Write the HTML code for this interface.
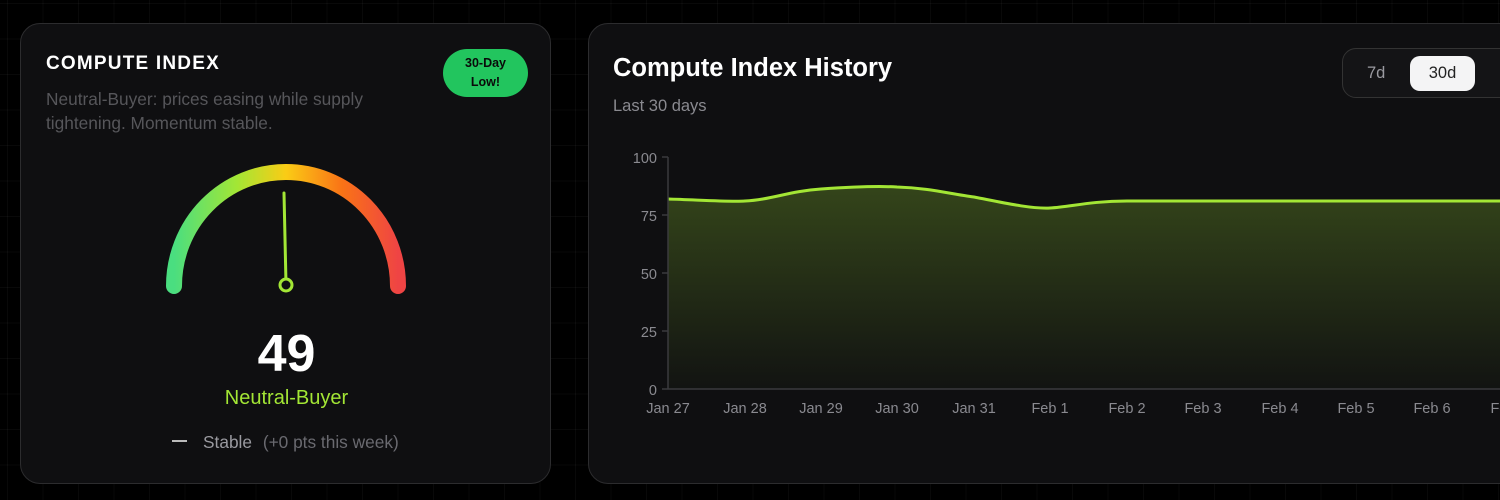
<!DOCTYPE html>
<html><head><meta charset="utf-8"><style>
*{margin:0;padding:0;box-sizing:border-box}
body{width:1500px;height:500px;overflow:hidden;background:#000;font-family:"Liberation Sans",sans-serif;position:relative;
background-image:linear-gradient(rgba(255,255,255,0.035) 1px,transparent 1px),linear-gradient(90deg,rgba(255,255,255,0.035) 1px,transparent 1px);background-size:35.5px 35.5px;background-position:7px 3px}
.card{position:absolute;top:23px;height:461px;border:1px solid #2c2c2e;border-radius:20px;background:rgba(16,16,18,0.95)}
.l{left:20px;width:531px}
.r{left:588px;width:940px}
.t1{position:absolute;left:25px;top:29px;color:#fff;font-weight:bold;font-size:19px;letter-spacing:1.2px}
.d{position:absolute;left:25px;top:63px;color:#56565a;font-size:17.3px;line-height:24px;width:380px}
.badge{position:absolute;left:422px;top:25px;width:85px;height:48px;border-radius:24px;background:#22c55e;color:#0a0a0a;font-weight:bold;font-size:12.5px;line-height:19px;text-align:center;padding-top:5px}
.num{position:absolute;left:0;width:531px;text-align:center;top:300px;color:#fff;font-weight:bold;font-size:52px}
.nb{position:absolute;left:0;width:531px;text-align:center;top:363px;color:#a3e635;font-size:20px}
.st{position:absolute;left:151px;top:408px;color:#9a9aa0;font-size:17.3px}
.st b{display:inline-block;width:15px;height:2px;background:#bbb;vertical-align:middle;margin-right:16px;position:relative;top:-2px}
.st span{color:#6a6a70;margin-left:6px}
.t2{position:absolute;left:24px;top:30px;color:#fff;font-weight:bold;font-size:25.5px}
.sub{position:absolute;left:24px;top:73px;color:#8a8a90;font-size:16.5px}
.tog{position:absolute;left:753px;top:24px;width:200px;height:50px;border:1px solid #333;border-radius:14px;background:#141416}
.tog .a{position:absolute;left:24px;top:15px;color:#9a9aa0;font-size:16.5px}
.tog .b{position:absolute;left:67px;top:7px;width:65px;height:35px;border-radius:10px;background:#f4f4f5;color:#222;font-size:16.5px;text-align:center;line-height:35px}
</style></head><body>
<div class="card l">
<div class="t1">COMPUTE INDEX</div>
<div class="d">Neutral-Buyer: prices easing while supply tightening. Momentum stable.</div>
<div class="badge">30-Day<br>Low!</div>
<svg style="position:absolute;left:0;top:0" width="531" height="300">
<defs><linearGradient id="g" x1="0" x2="1" y1="0" y2="0">
<stop offset="0" stop-color="#4ade80"/><stop offset="0.28" stop-color="#a3e635"/><stop offset="0.5" stop-color="#facc15"/><stop offset="0.75" stop-color="#f97316"/><stop offset="1" stop-color="#ef4444"/></linearGradient></defs>
<path d="M153 262 A112 114 0 0 1 377 262" fill="none" stroke="url(#g)" stroke-width="16" stroke-linecap="round"/>
<line x1="265" y1="260" x2="263" y2="169" stroke="#a3e635" stroke-width="3" stroke-linecap="round"/>
<circle cx="265" cy="261" r="6" fill="#101012" stroke="#a3e635" stroke-width="3"/>
</svg>
<div class="num">49</div>
<div class="nb">Neutral-Buyer</div>
<div class="st"><b></b>Stable <span>(+0 pts this week)</span></div>
</div>
<div class="card r">
<div class="t2">Compute Index History</div>
<div class="sub">Last 30 days</div>
<div class="tog"><div class="a">7d</div><div class="b">30d</div></div>
</div>
<svg style="position:absolute;left:0;top:0" width="1500" height="500" font-family="Liberation Sans" font-size="14.5" fill="#8a8a90">
<defs><linearGradient id="f" x1="0" x2="0" y1="0" y2="1"><stop offset="0" stop-color="#a3e635" stop-opacity="0.25"/><stop offset="1" stop-color="#a3e635" stop-opacity="0.02"/></linearGradient></defs>
<path d="M668 199 C700 200,730 202,745 201 C770 200,790 191,821 189 C850 187,880 186,897 187 C930 188,950 194,974 197 C1000 202,1030 209,1050 208 C1070 207,1090 201,1127 201 L1500 201 L1500 389 L668 389 Z" fill="url(#f)"/>
<path d="M668 199 C700 200,730 202,745 201 C770 200,790 191,821 189 C850 187,880 186,897 187 C930 188,950 194,974 197 C1000 202,1030 209,1050 208 C1070 207,1090 201,1127 201 L1500 201" fill="none" stroke="#a3e635" stroke-width="3"/>
<g stroke="#3a3a3e" stroke-width="1.5"><line x1="668" y1="157" x2="668" y2="389"/><line x1="668" y1="389" x2="1500" y2="389"/>
<line x1="662" y1="157" x2="668" y2="157"/><line x1="662" y1="215" x2="668" y2="215"/><line x1="662" y1="273" x2="668" y2="273"/><line x1="662" y1="331" x2="668" y2="331"/><line x1="662" y1="389" x2="668" y2="389"/></g>
<g text-anchor="end"><text x="657" y="163">100</text><text x="657" y="221">75</text><text x="657" y="279">50</text><text x="657" y="337">25</text><text x="657" y="395">0</text></g>
<g text-anchor="middle"><text x="668" y="413">Jan 27</text><text x="745" y="413">Jan 28</text><text x="821" y="413">Jan 29</text><text x="897" y="413">Jan 30</text><text x="974" y="413">Jan 31</text><text x="1050" y="413">Feb 1</text><text x="1127" y="413">Feb 2</text><text x="1203" y="413">Feb 3</text><text x="1280" y="413">Feb 4</text><text x="1356" y="413">Feb 5</text><text x="1432" y="413">Feb 6</text><text x="1509" y="413">Feb 7</text></g>
</svg>
</body></html>
